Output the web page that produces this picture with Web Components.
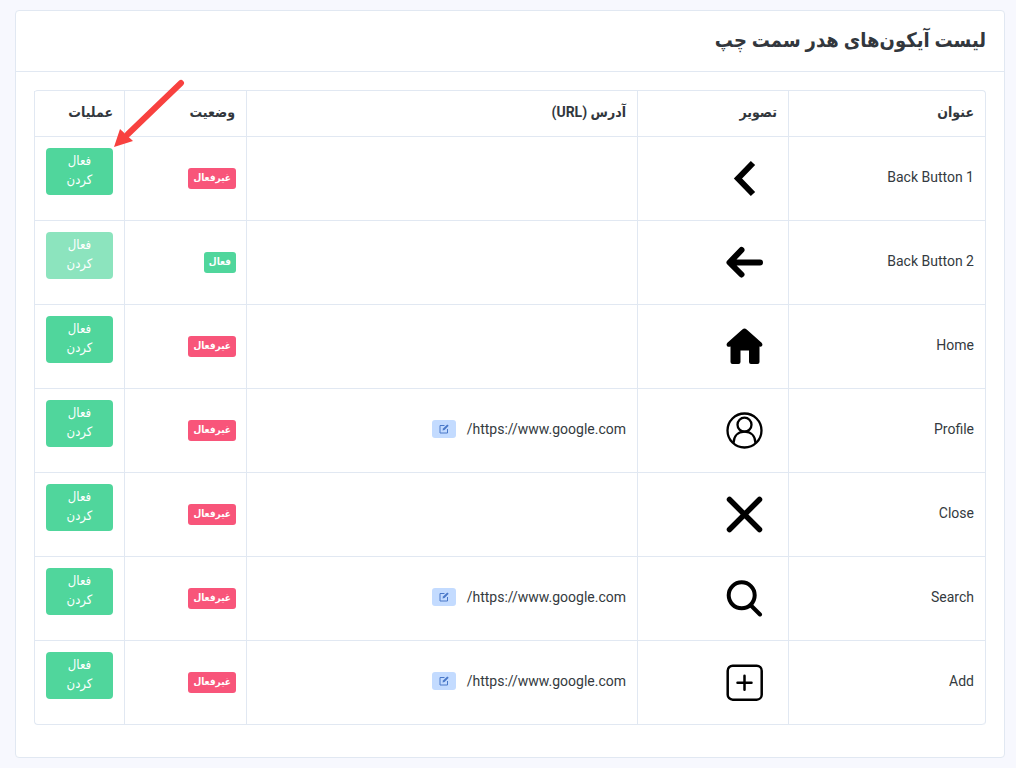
<!DOCTYPE html>
<html lang="fa" dir="rtl">
<head>
<meta charset="utf-8">
<meta name="viewport" content="width=device-width, initial-scale=1">
<title>لیست آیکون‌های هدر سمت چپ</title>
<style>
  body {
    margin: 0;
    padding: 10px 11px 10px 15px;
    background: #f7f8fe;
    color: #343a40;
    font: 14px/20px Roboto, "DejaVu Sans Condensed", "DejaVu Sans", sans-serif;
    --line: #e1e8f2;
    --green: #50d69c;
    --red: #f8557a;
  }
</style>
</head>
<body>

<panel-card>
  <span slot="title">لیست آیکون‌های هدر سمت چپ</span>
  <icon-table></icon-table>
</panel-card>

<template id="panel-card">
  <style>
    :host { display: block; background: #fff; border: 1px solid var(--line); border-radius: 4px; }
    header { padding: 13px 18px 15px; border-bottom: 1px solid var(--line); }
    h1 { margin: 0; font-size: 20px; line-height: 32px; font-weight: 700; color: #32373d; }
    main { padding: 18px 18px 32px; }
  </style>
  <header><h1><slot name="title"></slot></h1></header>
  <main><slot></slot></main>
</template>

<template id="icon-table">
  <style>
    :host { display: block; }
    table { width: 100%; table-layout: fixed; border-spacing: 0; border: 1px solid var(--line); border-width: 1px 1px 0 0; border-radius: 4px; }
    th, td { box-sizing: border-box; padding: 0 11px 3px; text-align: start; border: 0 solid var(--line); border-width: 0 0 1px 1px; }
    th { position: relative; height: 46px; font-size: 14px; font-weight: 700; color: #32373d; }
    td { height: 84px; }
    td.action { vertical-align: top; padding-top: 11px; }
    .name { width: 197px; }
    .image { width: 151px; }
    .status { width: 122px; }
    .action { width: 90px; }
    td.image { padding: 0 25px 1px; }
    td.status { padding: 0 10px; }
    tr:last-child td:first-child { border-end-start-radius: 4px; }
    tr:last-child td:last-child { border-end-end-radius: 4px; }
  </style>
  <table>
    <thead>
      <tr>
        <th class="name" scope="col">عنوان</th>
        <th class="image" scope="col">تصویر</th>
        <th scope="col">آدرس (URL)</th>
        <th class="status" scope="col">وضعیت</th>
        <th class="action" scope="col">عملیات<pointer-arrow></pointer-arrow></th>
      </tr>
    </thead>
    <tbody></tbody>
  </table>
</template>

<template id="pointer-arrow">
  <style>
    :host { position: absolute; left: 78px; top: -12px; z-index: 1; pointer-events: none; }
    svg { display: block; }
  </style>
  <svg width="72" height="70" viewBox="0 0 72 70" aria-hidden="true">
    <path d="M68 4 15 55" fill="none" stroke="#f8413f" stroke-width="6" stroke-linecap="round"/>
    <path d="M1 68 7 50 20 62z" fill="#f8413f"/>
  </svg>
</template>

<template id="status-badge">
  <style>
    :host { display: inline-block; vertical-align: middle; padding: 0 5px 2px; border-radius: 3px; background: var(--red); color: #fff; font-size: 10px; line-height: 19px; font-weight: 700; }
    :host([active]) { background: var(--green); }
  </style>
  <slot></slot>
</template>

<template id="activate-button">
  <style>
    :host { display: block; }
    button { display: block; width: 100%; margin: 0; padding: 3px 14px 6px; border: 0; border-radius: 4px; background: var(--green); color: #fff; font: inherit; font-size: 13px; line-height: 19px; text-align: center; cursor: pointer; }
    button:disabled { opacity: .65; cursor: default; }
  </style>
  <button type="button"><slot></slot></button>
</template>

<template id="editable-link">
  <style>
    :host { display: flex; align-items: center; gap: 11px; }
    a { color: inherit; text-decoration: none; }
    button { display: grid; place-items: center; width: 24px; height: 18px; padding: 0; border: 0; border-radius: 3px; background: #c3dbff; color: #4a78c8; cursor: pointer; }
  </style>
  <a></a>
  <button type="button" aria-label="ویرایش">
    <svg width="10" height="10" viewBox="0 0 10 10" fill="none" stroke="currentColor" aria-hidden="true">
      <path d="M5.5 1.5h-4.500v7.500h7.500v-4"/>
      <path d="M3.500 6.500 4 4.500 8.300.4 9.700 1.800 5.500 6z" fill="currentColor" stroke="none"/>
    </svg>
  </button>
</template>

<script>
  const ICONS = {
    chevron: '<path d="M27 3 12 18.500 27 34" fill="none" stroke="#000" stroke-width="6"/>',
    arrow: '<path d="M34 18.500H5M15.500 6 3.500 18.500 15.500 30.500" fill="none" stroke="#000" stroke-width="6" stroke-linecap="round" stroke-linejoin="round"/>',
    home: '<path d="M16.300 1.500Q18.500-.4 20.700 1.500L35.600 14.800Q37 16.300 36 18 35 19 33.500 18.600V34Q33.500 36 31.500 36H25Q23 36 23 34V22.500H14.500V34Q14.500 36 12.500 36H6.500Q4.500 36 4.500 34V18.600Q2 19.300 1 18 0 16.300 1.400 14.800Z"/>',
    profile: '<g fill="none" stroke="#000" stroke-width="2.300"><circle cx="18.500" cy="18.500" r="17"/><circle cx="18.500" cy="12.700" r="7"/><path d="M7.500 31C7.800 24 12 19.700 18.500 19.700S29.200 24 29.500 31"/></g>',
    close: '<path d="M3.500 3.500 33.500 33.500M33.500 3.500 3.500 33.500" stroke="#000" stroke-width="5.500" stroke-linecap="round"/>',
    search: '<g fill="none" stroke="#000" stroke-width="4" stroke-linecap="round"><circle cx="15.700" cy="15.300" r="13"/><path d="M25 25.500 34 34.500"/></g>',
    add: '<rect x="1.700" y="1.700" width="34" height="34" rx="5" fill="none" stroke="#000" stroke-width="2.500"/><path d="M18.500 11.800V25.800M11.500 18.800H25.500" stroke="#000" stroke-width="2.500" stroke-linecap="round"/>'
  };

  const ROWS = [
    { name: 'Back Button 1', icon: 'chevron' },
    { name: 'Back Button 2', icon: 'arrow', active: true },
    { name: 'Home', icon: 'home' },
    { name: 'Profile', icon: 'profile', url: 'https://www.google.com/' },
    { name: 'Close', icon: 'close' },
    { name: 'Search', icon: 'search', url: 'https://www.google.com/' },
    { name: 'Add', icon: 'add', url: 'https://www.google.com/' }
  ];

  class TemplateElement extends HTMLElement {
    constructor() {
      super();
      const template = document.getElementById(this.localName);
      this.attachShadow({ mode: 'open' }).append(template.content.cloneNode(true));
    }
  }

  class PanelCard extends TemplateElement {}
  class PointerArrow extends TemplateElement {}
  class StatusBadge extends TemplateElement {}

  class ActivateButton extends TemplateElement {
    connectedCallback() {
      this.shadowRoot.querySelector('button').disabled = this.hasAttribute('disabled');
    }
  }

  class EditableLink extends TemplateElement {
    connectedCallback() {
      const link = this.shadowRoot.querySelector('a');
      link.href = this.getAttribute('href');
      link.textContent = this.getAttribute('href');
    }
  }

  class HeaderIcon extends HTMLElement {
    connectedCallback() {
      if (this.shadowRoot) return;
      this.attachShadow({ mode: 'open' }).innerHTML = `
        <style>:host { display: block; width: 37px; } svg { display: block; }</style>
        <svg width="37" height="37" viewBox="0 0 37 37" aria-hidden="true">${ICONS[this.getAttribute('name')]}</svg>`;
    }
  }

  class IconTable extends TemplateElement {
    connectedCallback() {
      this.shadowRoot.querySelector('tbody').innerHTML = ROWS.map(row => `
        <tr>
          <td class="name">${row.name}</td>
          <td class="image"><header-icon name="${row.icon}"></header-icon></td>
          <td>${row.url ? `<editable-link href="${row.url}"></editable-link>` : ''}</td>
          <td class="status"><status-badge ${row.active ? 'active' : ''}>${row.active ? 'فعال' : 'غیرفعال'}</status-badge></td>
          <td class="action"><activate-button ${row.active ? 'disabled' : ''}>فعال کردن</activate-button></td>
        </tr>`).join('');
    }
  }

  customElements.define('panel-card', PanelCard);
  customElements.define('pointer-arrow', PointerArrow);
  customElements.define('status-badge', StatusBadge);
  customElements.define('activate-button', ActivateButton);
  customElements.define('editable-link', EditableLink);
  customElements.define('header-icon', HeaderIcon);
  customElements.define('icon-table', IconTable);
</script>
</body>
</html>
